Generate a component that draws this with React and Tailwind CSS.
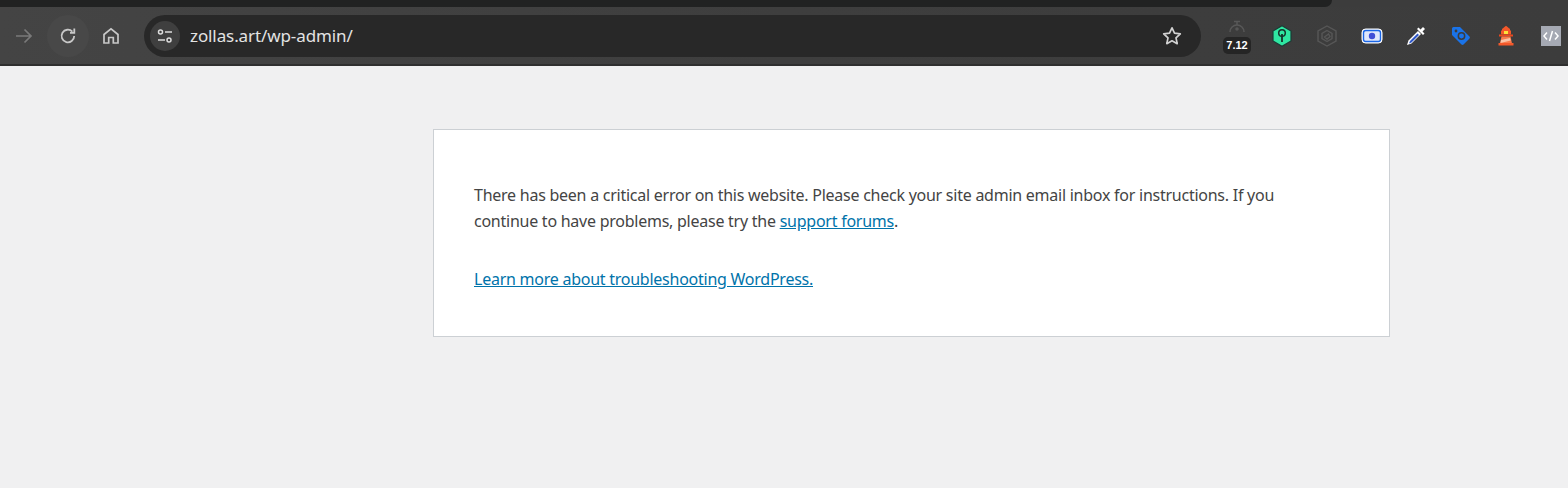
const ExtIcon = ({ children, className = "" }) => (
  <div className={`w-[24px] h-[24px] flex items-center justify-center shrink-0 ${className}`}>{children}</div>
);

const Toolbar = () => (
  <div className="h-[66px] flex flex-col bg-[#3c3c3c]">
    {/* tab strip sliver */}
    <div className="h-[7px] bg-[#3c3c3c] shrink-0">
      <div className="h-[7px] w-[1332px] bg-[#212222] rounded-br-[10px]"></div>
    </div>
    <div className="h-[57px] flex items-center bg-gradient-to-r from-[#444444] via-[#3e3e3e] to-[#3c3c3c] shrink-0">
      <svg className="ml-[15px] shrink-0" width="18" height="18" viewBox="0 0 18 18" fill="none" stroke="#7a7a7a" strokeWidth="1.7">
        <path d="M1 9h15M9.5 2.5 16 9l-6.500 6.500" />
      </svg>
      <div className="ml-[14px] w-[42px] h-[42px] rounded-full bg-[#484848] flex items-center justify-center shrink-0">
        <svg width="20" height="20" viewBox="0 0 20 20" fill="none" stroke="#c8c8c8" strokeWidth="1.8">
          <path d="M16.200 10a6.300 6.300 0 1 1-1.800-4.400" />
          <path d="M16.300 2.500v4.300h-4.300" />
        </svg>
      </div>
      <svg className="ml-[13px] shrink-0" width="18" height="18" viewBox="0 0 18 18" fill="none" stroke="#c8c8c8" strokeWidth="1.7">
        <path d="M2 7.500 9 1.800l7 5.700V16h-4.700v-5.500H6.700V16H2z" />
      </svg>
      <div className="ml-[24px] w-[1057px] h-[42px] rounded-full bg-[#282828] flex items-center shrink-0">
        <div className="ml-[6px] w-[30px] h-[30px] rounded-full bg-[#3f3f3f] flex items-center justify-center shrink-0">
          <svg width="18" height="16" viewBox="0 0 18 16" fill="none" stroke="#dcdcdc" strokeWidth="1.500">
            <circle cx="4.500" cy="4" r="2" />
            <path d="M9 4h7M2 12h7" />
            <circle cx="13" cy="12" r="2" />
          </svg>
        </div>
        <span className="ml-[10px] text-[17px] tracking-[-0.1px] text-[#e3e3e3] font-['Noto_Sans',sans-serif] whitespace-nowrap">
          zollas.art/wp-admin/
        </span>
        <svg className="ml-auto mr-[19px] shrink-0" width="20" height="20" viewBox="0 0 20 20" fill="none" stroke="#d2d2d2" strokeWidth="1.700" strokeLinejoin="round">
          <path d="m10 1.800 2.500 5.400 5.800.7-4.300 4 1.200 5.800L10 14.800l-5.200 2.900L6 11.900l-4.300-4 5.800-.7z" />
        </svg>
      </div>
      {/* timer extension */}
      <div className="ml-[19px] w-[34px] h-[36px] relative shrink-0">
        <svg className="absolute left-[7px] top-[2px]" width="20" height="18" viewBox="0 0 20 18" fill="none" stroke="#585858" strokeWidth="1.500">
          <path d="M7 1.500h6M10 2v3" />
          <path d="M3 12a7 7 0 0 1 14 0" />
          <circle cx="10" cy="9" r="1" fill="#585858" />
        </svg>
        <div className="absolute left-[3px] bottom-[0px] w-[28px] h-[17px] rounded-[5px] bg-[#252525] text-white text-[11px] leading-[17px] font-bold text-center font-['Liberation_Sans',sans-serif]">
          7.12
        </div>
      </div>
      <ExtIcon className="ml-[16px]">
        <svg width="20" height="22" viewBox="0 0 20 22">
          <path d="M10 .8 19 6v10l-9 5.200L1 16V6z" fill="#2fe6a2" stroke="#1c3b35" strokeWidth="1.200" />
          <circle cx="10" cy="8" r="3.300" fill="none" stroke="#16332c" strokeWidth="1.500" />
          <path d="M10 9v8" stroke="#16332c" strokeWidth="1.800" />
        </svg>
      </ExtIcon>
      <ExtIcon className="ml-[21px]">
        <svg width="20" height="22" viewBox="0 0 20 22" fill="none" stroke="#575757" strokeWidth="1.400">
          <path d="M10 1 19 6v10l-9 5-9-5V6z" />
          <path d="M10 5.500 15 8.500v5l-5 3-5-3v-5z" />
          <path d="m7.500 12 4-3 1.500 2.500-3 2.500z" />
        </svg>
      </ExtIcon>
      <ExtIcon className="ml-[21px]">
        <svg width="22" height="18" viewBox="0 0 22 18">
          <rect x="1" y="2" width="20" height="14" rx="3.500" fill="#fff" stroke="#fff" strokeWidth="1" />
          <rect x="2.500" y="3.500" width="17" height="11" rx="2.200" fill="#dfe7fb" stroke="#1a66e6" strokeWidth="1.400" />
          <circle cx="11" cy="9" r="3.200" fill="#3f4fd6" />
        </svg>
      </ExtIcon>
      <ExtIcon className="ml-[20px]">
        <svg width="22" height="22" viewBox="0 0 22 22">
          <path d="m13 6-9.500 9.500L2 20l4.500-1.500L16 9z" fill="#fff" />
          <path d="m12.500 8.500-7.500 7.500-1 2.500 2.500-1L14 10z" fill="#2f57c8" />
          <path d="m12 4 6 6 1.500-1.500-2-2 2.500-2.500-2-2-2.500 2.500-2-2z" fill="#fff" />
        </svg>
      </ExtIcon>
      <ExtIcon className="ml-[21px]">
        <svg width="20" height="20" viewBox="0 0 20 20">
          <path d="M1 2.500A1.500 1.500 0 0 1 2.500 1H9l9.500 9.500a1.500 1.500 0 0 1 0 2L12.500 18.500a1.500 1.500 0 0 1-2 0L1 9z" fill="#1a73e8" />
          <circle cx="5" cy="5" r="1.400" fill="#3c3c3c" />
          <circle cx="10.500" cy="10" r="3.200" fill="none" stroke="#3c3c3c" strokeWidth="1.500" />
        </svg>
      </ExtIcon>
      <ExtIcon className="ml-[21px]">
        <svg width="18" height="22" viewBox="0 0 18 22">
          <path d="M9 .8 13 4v2H5V4z" fill="#f4582a" />
          <rect x="4" y="5.500" width="10" height="4" fill="#f4582a" />
          <rect x="7" y="6" width="4" height="3" fill="#fbe23c" />
          <path d="M2 9.500h14v2H2z" fill="#e8481f" />
          <path d="M4.500 11.500h9l1.500 7H3z" fill="#f97a4c" />
          <path d="m4 15 9-2 .7 2.500L3.500 18z" fill="#f9c4a8" />
          <rect x="1.500" y="18" width="15" height="2.500" fill="#f4582a" />
        </svg>
      </ExtIcon>
      <ExtIcon className="ml-[21px]">
        <div className="w-[20px] h-[20px] bg-[#a5a9b3] flex items-center justify-center">
          <svg width="16" height="12" viewBox="0 0 16 12" fill="none" stroke="#fff" strokeWidth="1.500">
            <path d="M4 2.500.9 6 4 9.500M12 2.500 15.100 6 12 9.500M9.500 1l-3 10" />
          </svg>
        </div>
      </ExtIcon>
    </div>
    <div className="h-[2px] bg-[#2f2f2f] shrink-0"></div>
  </div>
);

export default function App() {
  return (
    <div className="w-[1568px] h-[488px] overflow-hidden bg-[#f0f0f1] font-['Noto_Sans',sans-serif]">
      <Toolbar />
      <div className="ml-[433px] mt-[63px] w-[957px] h-[208px] bg-white border border-[#ccd0d4] px-[40px] pt-[52px] text-[16px] leading-[26px] text-[#444444]">
        <p className="tracking-[-0.25px] whitespace-nowrap">
          There has been a critical error on this website. Please check your site admin email inbox for instructions. If you
          <br />
          continue to have problems, please try the{" "}
          <a href="#" className="text-[#0073aa] underline">support forums</a>.
        </p>
        <p className="mt-[32px] tracking-[-0.25px]">
          <a href="#" className="text-[#0073aa] underline">Learn more about troubleshooting WordPress.</a>
        </p>
      </div>
    </div>
  );
}
